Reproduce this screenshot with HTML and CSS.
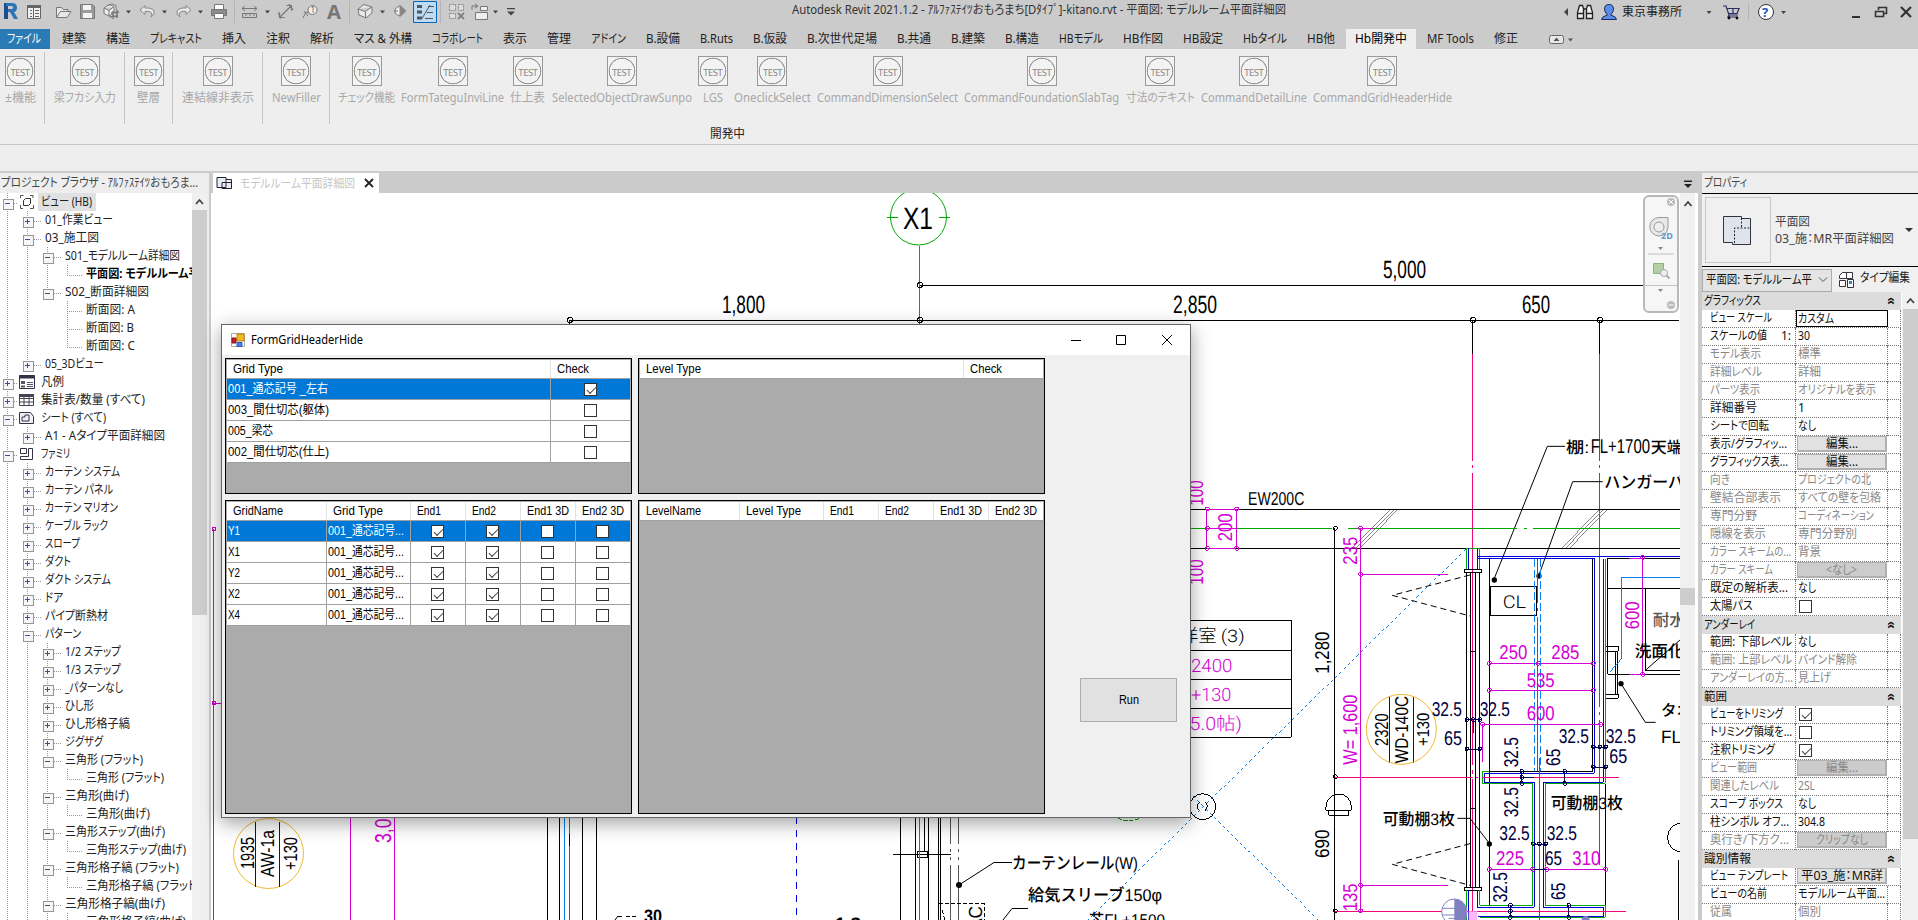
FILE: index.html
```html
<!DOCTYPE html>
<html lang="ja">
<head>
<meta charset="utf-8">
<title>Autodesk Revit 2021.1.2</title>
<link rel="stylesheet" href="styles.css">
</head>
<body>
<header class="titlebar">
  <svg class="qat" width="520" height="29" viewBox="0 0 520 29">
    <path d="M4 3h4v16H4z" fill="#1b4f8f"/><path d="M6 3h6q5 0 5 5q0 3-3 4l4 7h-4l-4-7H8V9h4q1 0 1-1.500T12 6H6z" fill="#2a75b8"/>
    <g fill="#f0f0f0" stroke="#666"><path d="M27.500 5.500h13v13h-13z"/><path d="M27 6.500h14" stroke-width="3"/><path d="M30 10.500h2M30 13.500h2M30 16.500h2M35 10.500h4M35 13.500h4M35 16.500h4M33.500 8v10" stroke-width="1"/></g>
    <path d="M56.500 17.500v-10h5l1.500 2h5v2.500M56.500 17.500l4-6h10.500l-4 6z" fill="#e8e8e8" stroke="#777"/>
    <path d="M80.500 4.500h12l2 2v12h-14z" fill="#9a9a9a" stroke="#777"/><path d="M83 5h8v5h-8zM83 13h9v5h-9z" fill="#f4f4f4"/>
    <path d="M104 8l5-3.500l5 2v6l-5 3.500l-5-2.500zM104 8l5 2.500l5-4M109 10.500v6M108 5.500q3-3 8 0v5" fill="#eee" stroke="#777"/><path d="M111 13l8-1M110 17l8-1M113 11v8M117 10v8" stroke="#777" stroke-width="1.500"/>
    <path d="M145 5.500l-5 4.500l5 4.500v-3q5-1 6.500 1.500q1 2-.5 4q4-2 3-6q-1.500-3.500-9-3z" fill="#e6e6e6" stroke="#888"/>
    <path d="M186 5.500l5 4.500l-5 4.500v-3q-5-1-6.500 1.500q-1 2 .5 4q-4-2-3-6q1.500-3.500 9-3z" fill="#e6e6e6" stroke="#888"/>
    <path d="M214.500 4.500h9v6h-9z" fill="#fff" stroke="#777"/><path d="M211.500 9.500h15v6h-15z" fill="#8d8d8d" stroke="#777"/><path d="M214.500 13.500h9v5h-9z" fill="#fff" stroke="#777"/>
    <path d="M242 8.500h15M245 6l-3 2.500l3 2.500M254 6l3 2.500l-3 2.500M242.500 13.500h14v4h-14zM246 13v3M250 13v3M254 13v3" fill="none" stroke="#777"/>
    <path d="M280 17l11-11M286.500 5.500h5v5M284.500 17.500h-5v-5M278.500 12.500l2 6M289 4l4 6" fill="none" stroke="#777" stroke-width="1.200"/>
    <circle cx="312.500" cy="10" r="4.500" fill="#eee" stroke="#777"/><text x="310.500" y="13" font-size="8" fill="#555">1</text><path d="M303 18l3-6l3 1M304 11l4 5" fill="none" stroke="#777"/>
    <text x="327" y="19" font-size="19" font-weight="bold" fill="#777" textLength="14" lengthAdjust="spacingAndGlyphs">A</text>
    <path d="M358 9l6-4.500l8 2.500v6l-6 5l-7-3zM358 9l7 2.500l7-4.500M365.500 12v6" fill="#e8e8e8" stroke="#777"/>
    <circle cx="399.500" cy="11" r="4.500" fill="#eee" stroke="#777"/><path d="M399.500 4.500v13l7-6.500z" fill="#888"/><path d="M394 11h4" stroke="#777"/>
    <path d="M413.500 1.500h23v21h-23z" fill="#bcdcf6" stroke="#0a63b8"/><path d="M417 6.500h5M417 12h5M417 18h5" stroke="#555" stroke-width="3"/><path d="M422 18.500l8-13.500M428 6.500h6M427 12.500h6M425 18.500h8" stroke="#555" fill="none"/>
    <path d="M449.500 4.500h6v6h-6zM458.500 4.500h5v6h-5zM449.500 13.500h6v5h-6z" fill="#ddd" stroke="#888" stroke-dasharray="2 1"/><path d="M458 13l6 6M464 13l-6 6" stroke="#777" stroke-width="1.700"/>
    <path d="M475.500 12.500h12v7h-12zM480.500 6.500h7v4h-7z" fill="#eee" stroke="#777"/><path d="M472 10v-4h6M475 4l3 2l-3 2" fill="none" stroke="#777"/>
    <path d="M234.500 1v22M349.500 1v22M440.500 1v22" stroke="#b4b4b4"/>
    <g fill="#444"><path d="M126 10.500h5l-2.500 3zM162 10.500h5l-2.500 3zM198 10.500h5l-2.500 3zM265 10.500h5l-2.500 3zM380 10.500h5l-2.500 3zM493 10.500h5l-2.500 3zM507 11.500h8l-4 4zM507 8h8v1.300h-8z"/></g>
  </svg>
  <h1 class="app-title"><span data-w="494">Autodesk Revit 2021.1.2 - ｱﾙﾌｧｽﾃｲﾂおもろまち[Dﾀｲﾌﾟ]-kitano.rvt - 平面図: モデルルーム平面詳細図</span></h1>
  <div class="account">
    <svg width="58" height="29" viewBox="1562 0 58 29"><path d="M1568 8v8l-4-4z" fill="#444"/><g fill="#eee" stroke="#222" stroke-width="1.300"><path d="M1577.500 18.500v-6l2-7h3l1 3v10zM1592.500 18.500v-6l-2-7h-3l-1 3v10z"/><path d="M1577.500 13.500h6M1586.500 13.500h6M1583.500 9h3"/></g><path d="M1601.500 19.500q0-3 6-4.500q-3-3-3-6q0-4.500 4.500-4.500t4.500 4.500q0 3-3 6q6 1.500 6 4.500z" fill="#5b8ee8" stroke="#1a2a60"/></svg>
    <span data-w="60">東京事務所</span>
    <svg width="236" height="29" viewBox="1682 0 236 29"><path d="M1706.500 11h5l-2.500 3zM1781 11h5l-2.500 3z" fill="#444"/><path d="M1723 6h3l3 9h9M1727 8.500h12l-2 5h-9M1733 8v6M1729 15l-1 2h9" fill="none" stroke="#2a2f60" stroke-width="1.200"/><circle cx="1729" cy="18" r="1.400"/><circle cx="1737" cy="18" r="1.400"/><path d="M1748.500 3v17" stroke="#b4b4b4"/><circle cx="1766" cy="12" r="7.500" fill="#fff" stroke="#333"/><text x="1762" y="17" font-size="13" font-weight="bold" fill="#2255bb">?</text><path d="M1852 16h8v2h-8z" fill="#333"/><path d="M1878.500 10v-2.500h8v6h-3M1875.500 11.500h8v5h-8z" fill="none" stroke="#333" stroke-width="1.600"/><path d="M1901 7l10 10M1911 7l-10 10" stroke="#333" stroke-width="2.200"/></svg>
  </div>
</header>
<nav class="tabs">
  <div class="tab file"><span data-w="34">ファイル</span></div>
  <div class="tab"><span data-w="24">建築</span></div><div class="tab"><span data-w="24">構造</span></div><div class="tab"><span data-w="52">プレキャスト</span></div><div class="tab"><span data-w="24">挿入</span></div><div class="tab"><span data-w="24">注釈</span></div><div class="tab"><span data-w="24">解析</span></div><div class="tab"><span data-w="58">マス &amp; 外構</span></div><div class="tab"><span data-w="51">コラボレート</span></div><div class="tab"><span data-w="24">表示</span></div><div class="tab"><span data-w="24">管理</span></div><div class="tab"><span data-w="35">アドイン</span></div><div class="tab"><span data-w="34">B.設備</span></div><div class="tab"><span data-w="33">B.Ruts</span></div><div class="tab"><span data-w="34">B.仮設</span></div><div class="tab"><span data-w="70">B.次世代足場</span></div><div class="tab"><span data-w="34">B.共通</span></div><div class="tab"><span data-w="34">B.建築</span></div><div class="tab"><span data-w="34">B.構造</span></div><div class="tab"><span data-w="44">HBモデル</span></div><div class="tab"><span data-w="40">HB作図</span></div><div class="tab"><span data-w="40">HB設定</span></div><div class="tab"><span data-w="44">Hbタイル</span></div><div class="tab"><span data-w="28">HB他</span></div><div class="tab active"><span data-w="52">Hb開発中</span></div><div class="tab"><span data-w="47">MF Tools</span></div><div class="tab"><span data-w="24">修正</span></div>
  <svg class="tab-toggle" width="28" height="20" viewBox="0 0 28 20"><rect x=".5" y="6.500" width="14" height="8" rx="2" fill="#e8e8e8" stroke="#666"/><path d="M4.500 12h6l-3-3.500zM19 9.500h5l-2.500 3z" fill="#555"/></svg>
</nav>
<section class="ribbon">
  <div class="buttons">
    <div class="group"><div class="cmd"><i>TEST</i><span data-w="31">±機能</span></div></div>
    <div class="group"><div class="cmd"><i>TEST</i><span data-w="62">梁フカシ入力</span></div></div>
    <div class="group"><div class="cmd"><i>TEST</i><span data-w="23">壁層</span></div></div>
    <div class="group"><div class="cmd"><i>TEST</i><span data-w="72">連結線非表示</span></div></div>
    <div class="group"><div class="cmd"><i>TEST</i><span data-w="49">NewFiller</span></div></div>
    <div class="group"><div class="cmd"><i>TEST</i><span data-w="57">チェック機能</span></div><div class="cmd"><i>TEST</i><span data-w="103">FormTateguInviLine</span></div><div class="cmd"><i>TEST</i><span data-w="35">仕上表</span></div><div class="cmd"><i>TEST</i><span data-w="140">SelectedObjectDrawSunpo</span></div><div class="cmd"><i>TEST</i><span data-w="20">LGS</span></div><div class="cmd"><i>TEST</i><span data-w="77">OneclickSelect</span></div><div class="cmd"><i>TEST</i><span data-w="141">CommandDimensionSelect</span></div><div class="cmd"><i>TEST</i><span data-w="155">CommandFoundationSlabTag</span></div><div class="cmd"><i>TEST</i><span data-w="69">寸法のテキスト</span></div><div class="cmd"><i>TEST</i><span data-w="106">CommandDetailLine</span></div><div class="cmd"><i>TEST</i><span data-w="139">CommandGridHeaderHide</span></div></div>
  </div>
  <div class="panel-name"><span data-w="35">開発中</span></div>
</section>
<main class="work">
  <aside class="browser">
    <h2><span data-w="197">プロジェクト ブラウザ - ｱﾙﾌｧｽﾃｲﾂおもろま...</span></h2>
    <div class="browser-body">
      <ul class="tree">
        <li class="l0 minus"><svg width="16" height="16" viewBox="0 0 16 16"><path d="M1.500 4v-2.500h3M11 1.500h3V4M14.500 11v3.500H11M4 14.500H1.500V11" fill="none" stroke="#555"/><path d="M4.500 6.500l2-2h5v5l-2 2h-5z" fill="#fff" stroke="#333"/></svg><span class="hl"><span data-w="51">ビュー (HB)</span></span></li>
        <li class="l1 plus"><span data-w="68">01_作業ビュー</span></li>
        <li class="l1 minus"><span data-w="54">03_施工図</span></li>
        <li class="l2 minus"><span data-w="115">S01_モデルルーム詳細図</span></li>
        <li class="l3 mid"><b data-w="158">平面図: モデルルーム平面詳細図</b></li>
        <li class="l2 minus"><span data-w="84">S02_断面詳細図</span></li>
        <li class="l3 more"><span data-w="49">断面図: A</span></li>
        <li class="l3 more"><span data-w="48">断面図: B</span></li>
        <li class="l3"><span data-w="49">断面図: C</span></li>
        <li class="l1 plus"><span data-w="59">05_3Dビュー</span></li>
        <li class="l0 plus"><svg width="16" height="16" viewBox="0 0 16 16"><path d="M.5 1.500h15v13H.5z" fill="#fff" stroke="#334"/><path d="M0 3h16" stroke="#334" stroke-width="3"/><path d="M2 7h4v3H2zM2 11.500h4v2H2z" fill="#556"/><path d="M8 8.500h6M8 10.500h6M8 12.500h6" stroke="#556"/></svg><span data-w="23">凡例</span></li>
        <li class="l0 plus"><svg width="16" height="16" viewBox="0 0 16 16"><path d="M.5 2.500h14v11H.5zM.5 6.500h14M.5 10h14M5 3v10M10 3v10" fill="#fff" stroke="#445"/><path d="M0 3.500h15" stroke="#445" stroke-width="3"/></svg><span data-w="104">集計表/数量 (すべて)</span></li>
        <li class="l0 minus"><svg width="16" height="16" viewBox="0 0 16 16"><path d="M.5 2.500h11l3 4v7H.5zM3 11V7h3V5h4v6z" fill="#eef0f5" stroke="#334"/></svg><span data-w="65">シート (すべて)</span></li>
        <li class="l1 plus"><span data-w="120">A1 - Aタイプ平面詳細図</span></li>
        <li class="l0 minus"><svg width="16" height="16" viewBox="0 0 16 16"><path d="M1.500 2.500h6v5h-6zM9.500 2.500h4v11h-12v-3h8z" fill="#fff" stroke="#334"/></svg><span data-w="29">ファミリ</span></li>
        <li class="l1 plus"><span data-w="75">カーテン システム</span></li>
        <li class="l1 plus"><span data-w="68">カーテン パネル</span></li>
        <li class="l1 plus"><span data-w="73">カーテン マリオン</span></li>
        <li class="l1 plus"><span data-w="63">ケーブル ラック</span></li>
        <li class="l1 plus"><span data-w="35">スロープ</span></li>
        <li class="l1 plus"><span data-w="26">ダクト</span></li>
        <li class="l1 plus"><span data-w="66">ダクト システム</span></li>
        <li class="l1 plus"><span data-w="18">ドア</span></li>
        <li class="l1 plus"><span data-w="63">パイプ断熱材</span></li>
        <li class="l1 minus"><span data-w="36">パターン</span></li>
        <li class="l2 plus"><span data-w="56">1/2 ステップ</span></li>
        <li class="l2 plus"><span data-w="56">1/3 ステップ</span></li>
        <li class="l2 plus"><span data-w="58">_パターンなし</span></li>
        <li class="l2 plus"><span data-w="29">ひし形</span></li>
        <li class="l2 plus"><span data-w="65">ひし形格子縞</span></li>
        <li class="l2 plus"><span data-w="38">ジグザグ</span></li>
        <li class="l2 minus"><span data-w="78">三角形 (フラット)</span></li>
        <li class="l3 mid"><span data-w="78">三角形 (フラット)</span></li>
        <li class="l2 minus"><span data-w="64">三角形(曲げ)</span></li>
        <li class="l3 mid"><span data-w="64">三角形(曲げ)</span></li>
        <li class="l2 minus"><span data-w="100">三角形ステップ(曲げ)</span></li>
        <li class="l3 mid"><span data-w="100">三角形ステップ(曲げ)</span></li>
        <li class="l2 minus"><span data-w="114">三角形格子縞 (フラット)</span></li>
        <li class="l3 mid"><span data-w="114">三角形格子縞 (フラット)</span></li>
        <li class="l2 minus"><span data-w="100">三角形格子縞(曲げ)</span></li>
        <li class="l3 mid"><span data-w="100">三角形格子縞(曲げ)</span></li>
      </ul>
      <div class="scroll"><svg width="15" height="17" viewBox="0 0 15 17"><path d="M4 11l3.500-4l3.500 4" fill="none" stroke="#444" stroke-width="1.800"/></svg><div class="thumb"></div></div>
    </div>
  </aside>
  <section class="view">
    <div class="view-tabs">
      <div class="view-tab"><svg width="17" height="16" viewBox="0 0 17 16"><path d="M1 2.500h9v10H1zM10 4.500h5.500v9H6v-6h9" fill="#e8edf5" stroke="#223"/></svg><span data-w="115">モデルルーム平面詳細図</span><svg width="12" height="12" viewBox="0 0 12 12"><path d="M2 2l8 8M10 2l-8 8" stroke="#222" stroke-width="1.800"/></svg></div>
      <svg class="tab-menu" width="12" height="12" viewBox="0 0 12 12"><path d="M2 2.500h8v1.500H2zM2 6h8l-4 4z" fill="#222"/></svg>
    </div>
    <div class="canvas">
      <svg class="drawing" width="1469" height="727" viewBox="211 193 1469 727" text-rendering="geometricPrecision">
        <g class="ln green"><path d="M919.500 246V324M887 217.500h11M939 217.500h11" /><circle class="soft" cx="918.500" cy="217" r="28"/><path d="M1118 818q11 6 22 0" stroke-dasharray="4 2"/></g>
        <g class="ln blk"><path d="M920 285.500H1679M570 320.500H1679M569.500 320v5M1472.500 320v34M1599.500 320v34"/><circle cx="570" cy="320" r="2.500"/><circle cx="920" cy="320" r="2.500"/><circle cx="920" cy="285" r="2.500"/><circle cx="1473" cy="320" r="2.500"/><circle cx="1600" cy="320" r="2.500"/></g>
        <g class="ln pink"><path d="M1472.500 354V461M1472.500 465v3M1472.500 473V765M1472.500 770v4M1472.500 779V920M1599.500 354V461M1599.500 465v3M1599.500 473V707M1599.500 712v3M1599.500 720V865"/></g>
        <g class="txt"><text x="903" y="229" font-size="31" textLength="30">X1</text><text x="722" y="313" textLength="43">1,800</text><text x="1173" y="313" textLength="44">2,850</text><text x="1383" y="278" textLength="43">5,000</text><text x="1522" y="313" textLength="28">650</text></g>
        <g transform="translate(1180 460) scale(.333333)" class="wide">
          <g class="ln gray"><path d="M516 264L630 150M528 264L641 150M540 264L652 150M1145 264L1258 150M1157 264L1269 150M1169 264L1281 150"/></g>
          <g class="ln blk"><path d="M0 148.500H1500M0 265.500H1500M463.500 205V1380M0 481.500H334.500V831.500H0M0 571.500H334M0 658.500H334M0 744.500H334"/>
            <path d="M859.500 337V1283M871.500 337V1283M886.500 337V1283M898.500 337V1283M871 574.500H886M871 1045.500H886M853.500 328.500h52v9h-52zM853.500 1283.500h52v8h-52z"/>
            <path d="M928.500 296V1335M1237.500 296V934M928 934.500H1240M931.500 379.500H1070.500V466.500H931.500zM1276.500 971V1336"/>
            <path d="M1283.500 643V295.500H1500M1283 385.500H1500M1396.500 385V631.500H1500M1283 643.500H1500M1277 559.500h38v15h-38zM1277 702.500h38v13h-38zM1307 574V702M1312 574V702"/>
            <path class="soft" d="M1396 631L1500 540M1155 -41H1102L943 355M1268 65H1178L1077 345M832 1075H870L928 1150M1323 671L1396 787H1427"/>
            <path class="soft" d="M870 345L637 406L870 468M870 1151L637 1213L870 1276" stroke-dasharray="18 12"/>
            <circle cx="68" cy="1040" r="39"/><path d="M60 1025q-16 14 0 28M74 1025q16 14 0 28M438 1051V1040a38 38 0 0 1 76 0V1051zM446 1066H506V1051M446 1066V1051M1500 1089a44 44 0 0 0 0 87M1495.500 1200V1380"/>
            <circle cx="466" cy="205" r="6"/><circle cx="466" cy="950" r="6"/><circle cx="466" cy="1353" r="6"/></g>
          <g fill="#000"><circle cx="943" cy="360" r="8"/><circle cx="1077" cy="348" r="8"/><circle cx="928" cy="1152" r="8"/><circle cx="1323" cy="671" r="8"/></g>
          <g class="ln green"><path d="M0 205.500H455M503 205.500H1012M1032 205.500h9M1059 205.500H1500M860.500 328V265.500H898.500V328M1276.500 296V970.500H1096.500V1336.500H1276.500V1372.500H899M899.500 1291V1336.500H1058.500V970.500H907.500V934.500H928M860.500 1291V1380"/></g>
          <g class="ln blue"><path d="M865.500 265V328M892.500 265V328M893 289.500H1500M893 295.500H1243.500V940.500H913.500V967.500H1063.500V1342.500H892.500V1291M1270.500 296V967.500H1090.500V1342.500H1270.500V1370.500H893M865.500 1291V1380M628.500 711V908M700.500 711V908"/></g>
          <g class="ln pink"><path d="M464 952.500H878M888 952.500h6M906 952.500H1317M464 1354.500H1338M1078.500 895V1380"/></g>
          <g class="ln mag"><path d="M80.500 148.500H168.500V265.500H80.500zM80 205.500H168M541.500 205V1353M542 343.500H804M542 1276.500H804M542 205.500H582M928 610.500H1240M928 691.500H1240M908 793.500H1262M907.500 793V906M1072.500 296V430M1072.500 445v9M1072.500 470V934M1387.500 292V643M1347 295.500H1388M1347 643.500H1388M928 1228.500H1058M1100 1228.500H1277"/>
            <circle cx="82" cy="147" r="6"/><circle cx="170" cy="147" r="6"/><circle cx="82" cy="205" r="6"/><circle cx="82" cy="265" r="6"/><circle cx="170" cy="265" r="6"/><circle cx="542" cy="205" r="6"/><circle cx="542" cy="343" r="6"/><circle cx="542" cy="1276" r="6"/><circle cx="542" cy="1353" r="6"/><circle cx="928" cy="610" r="6"/><circle cx="1075" cy="610" r="6"/><circle cx="1240" cy="610" r="6"/><circle cx="928" cy="691" r="6"/><circle cx="1240" cy="691" r="6"/><circle cx="908" cy="793" r="6"/><circle cx="1262" cy="793" r="6"/><circle cx="1388" cy="292" r="6"/><circle cx="1388" cy="643" r="6"/><circle cx="928" cy="1228" r="6"/><circle cx="1058" cy="1228" r="6"/><circle cx="1100" cy="1228" r="6"/><circle cx="1277" cy="1228" r="6"/></g>
          <g class="ln navy"><path d="M859 779.500H902M859 867.500H902M1240 861.500H1280M1240 921.500H1280M1058 1152.500H1100M1058 1228.500H1100M1026 934V970M1155 934V970M1026 952.500H1063M991.500 1336V1372M1167 1336V1372M880 779V820"/>
            <circle cx="861" cy="779" r="6"/><circle cx="880" cy="779" r="6"/><circle cx="900" cy="779" r="6"/><circle cx="861" cy="867" r="6"/><circle cx="900" cy="867" r="6"/><circle cx="1240" cy="861" r="6"/><circle cx="1260" cy="861" r="6"/><circle cx="1278" cy="861" r="6"/><circle cx="1240" cy="921" r="6"/><circle cx="1278" cy="921" r="6"/><circle cx="1060" cy="1152" r="6"/><circle cx="1078" cy="1152" r="6"/><circle cx="1098" cy="1152" r="6"/><circle cx="1026" cy="934" r="6"/><circle cx="1026" cy="952" r="6"/><circle cx="1026" cy="970" r="6"/><circle cx="1155" cy="934" r="6"/><circle cx="1155" cy="970" r="6"/><circle cx="991" cy="1336" r="6"/><circle cx="991" cy="1354" r="6"/><circle cx="991" cy="1372" r="6"/><circle cx="1167" cy="1336" r="6"/><circle cx="1167" cy="1372" r="6"/></g>
          <g class="ln sky"><path d="M1064.500 296V934M1081.500 296V934" stroke-dasharray="24 9"/><path d="M1500 352.500H1324.500V596L1290 636"/><path d="M857 268L-281 1385M0 970L413 1378" stroke-dasharray="9 9"/></g>
          <circle class="ln soft yel" cx="664" cy="808" r="105"/>
          <g><circle cx="823" cy="1355" r="38" fill="#fff" stroke="#8080c0" stroke-width="3"/><path d="M823 1317a38 38 0 0 1 36 26v37h-36z" fill="#8080c0"/><path d="M788 1345h70M788 1365h70M806 1375h50" stroke="#8080c0" stroke-width="3"/><path d="M866 1354h26v26h-26z" fill="#ffb8ff"/><path d="M1205 1380a12 12 0 0 1 24 0z" fill="#8080c0"/></g>
          <g class="txt big"><text x="204" y="136" font-size="56" textLength="169">EW200C</text>
            <text x="1158" y="-22" font-size="48" textLength="70">棚:</text><text x="1232" y="-20" textLength="178">FL+1700</text><text x="1412" y="-22" font-size="48">天端</text>
            <text x="1273" y="83" font-size="50" textLength="335">ハンガーパイプ</text><text x="608" y="1094" font-size="50" textLength="217">可動棚3枚</text><text x="1112" y="1048" font-size="50" textLength="217">可動棚3枚</text>
            <text x="1364" y="592" font-size="50">洗面化粧台</text><text x="1418" y="497" font-size="50" fill="#555">耐水</text><text x="1443" y="768" font-size="48" textLength="140">タオル</text><text x="1443" y="848" font-size="54" textLength="120">FL+1</text></g>
          <g class="txt big thin"><text x="968" y="445" font-size="53" textLength="70">CL</text><text x="0" y="547" font-size="55" textLength="110">洋室</text><text x="122" y="547" font-size="52" textLength="72">(3)</text></g>
          <g class="txt big mg thin"><text x="33" y="635" font-size="55" textLength="124">2400</text><text x="33" y="724" font-size="55" textLength="121">+130</text><text x="10" y="811" font-size="55" textLength="176">(5.0帖)</text></g>
          <g class="txt big mg"><text x="958" y="597" textLength="84">250</text><text x="1114" y="597" textLength="84">285</text><text x="1040" y="681" textLength="84">535</text><text x="1040" y="779" textLength="84">600</text><text x="948" y="1215" textLength="84">225</text><text x="1177" y="1215" textLength="84">310</text>
            <text transform="translate(69 137) rotate(-90)" textLength="76">100</text><text transform="translate(155 244) rotate(-90)" textLength="84">200</text><text transform="translate(69 374) rotate(-90)" textLength="76">100</text><text transform="translate(531 314) rotate(-90)" textLength="84">235</text><text transform="translate(531 914) rotate(-90)" textLength="210">W= 1,600</text><text transform="translate(531 1354) rotate(-90)" textLength="84">135</text><text transform="translate(1377 508) rotate(-90)" textLength="84">600</text></g>
          <g class="txt big"><text transform="translate(446 641) rotate(-90)" textLength="126">1,280</text><text transform="translate(446 1194) rotate(-90)" textLength="86">690</text><text transform="translate(624 858) rotate(-90)" font-size="56" textLength="98">2320</text><text transform="translate(683 910) rotate(-90)" font-size="56" textLength="202">WD-140C</text><text transform="translate(748 858) rotate(-90)" font-size="52" textLength="100">+130</text></g>
          <g class="txt big nv"><text x="755" y="768" textLength="91">32.5</text><text x="899" y="768" textLength="91">32.5</text><text x="792" y="854" textLength="54">65</text><text x="1136" y="848" textLength="91">32.5</text><text x="1277" y="848" textLength="91">32.5</text><text x="1288" y="909" textLength="54">65</text><text x="958" y="1140" textLength="91">32.5</text><text x="1100" y="1140" textLength="91">32.5</text><text x="1095" y="1215" textLength="51">65</text>
            <text transform="translate(1013 922) rotate(-90)" textLength="91">32.5</text><text transform="translate(1141 918) rotate(-90)" textLength="52">65</text><text transform="translate(1013 1072) rotate(-90)" textLength="91">32.5</text><text transform="translate(980 1327) rotate(-90)" textLength="91">32.5</text><text transform="translate(1154 1320) rotate(-90)" textLength="52">65</text></g>
        </g>
        <g class="ln mag"><path d="M213.500 529V920M213 703.500h9M350.500 815V920M394.500 815V920"/><circle cx="214" cy="529" r="2"/><circle cx="214" cy="703" r="2"/></g>
        <circle class="ln soft yel" cx="268.500" cy="853.500" r="35"/>
        <g class="ln blue"><path d="M255.500 822V887M279.500 822V887"/><path d="M796.500 817V920" stroke-dasharray="7 6"/></g>
        <g class="txt"><text transform="translate(254 869) rotate(-90)" font-size="19" textLength="32">1935</text><text transform="translate(274 877) rotate(-90)" font-size="19" textLength="47">AW-1a</text><text transform="translate(297 870) rotate(-90)" font-size="19" textLength="33">+130</text><text class="mg" transform="translate(391 843) rotate(-90)" font-size="23" textLength="44">3,035</text></g>
        <g class="ln blk"><path d="M547.500 815V920M559.500 815V920M582.500 815V920M596.500 815V920M900.500 815V920M915.500 815V920M924.500 815V851M928.500 815V920M938.500 815V920M940.500 815V920M893 854.500H951M917.500 851.500h10v6h-10z"/><path d="M950.500 815V844M950.500 849v3M950.500 857v3M950.500 865V920M958.500 815V844M958.500 849v3M958.500 857v3M958.500 865V920" stroke="#555"/><path d="M939 903.500H984V920M942 910l3 10M618 916.500h4M626 916.500h10" stroke-dasharray="4 2"/><path class="soft" d="M959 885L994 862.500H1012M1028 908.500H1012L1003 920M618 916l-3 4"/></g>
        <path d="M564.500 815V920" class="ln sky"/><path d="M569.500 815V834M569.500 846V920" class="ln pink"/><path d="M919.500 815V920" class="ln green"/><path d="M569.500 834V846" class="ln blk"/>
        <circle cx="959" cy="885" r="3"/>
        <g class="txt"><text x="1012" y="869" font-size="17" textLength="126">カーテンレール(W)</text><text x="1028" y="901" font-size="17" textLength="134">給気スリーブ150φ</text><text x="1089" y="926" font-size="17" textLength="76">芯FL+1500</text><text transform="translate(982 930) rotate(-90)" font-size="19" textLength="24">AC</text><text x="644" y="922" font-size="18" font-weight="bold" textLength="18">30</text><text x="835" y="930" font-size="18" font-weight="bold" textLength="26">1 2</text></g>
      </svg>
      <svg class="navbar" width="36" height="118" viewBox="0 0 36 118"><rect x="1" y="1" width="34" height="116" rx="5" fill="#f4f4f4" fill-opacity=".8" stroke="#b8b8b8" stroke-width="2"/><circle cx="28" cy="7" r="4" fill="#bbb"/><path d="M26 5l4 4M30 5l-4 4" stroke="#fff"/><path d="M16 22.500h9v10q-1 8-9 8.500a9 9 0 0 1 0-18.500z" fill="#e6e8ea" stroke="#999"/><circle cx="16" cy="32" r="5" fill="#eee" stroke="#999"/><text x="18" y="44" font-size="9" font-weight="bold" fill="#6a98c8">2D</text><path d="M15 52h5l-2.500 3zM15 94h5l-2.500 3z" fill="#888"/><path d="M5 59h26" stroke="#c0c0c0"/><path d="M10.500 68.500h10v10h-10z" fill="#b5cfa5" stroke="#8db080"/><circle cx="21" cy="78" r="3.500" fill="#eee" stroke="#aaa"/><path d="M23.500 80.500l3 3" stroke="#aaa" stroke-width="2"/><circle cx="28" cy="110" r="4" fill="#bbb"/><path d="M25.500 110h5" stroke="#fff"/></svg>
      <div class="scroll"><svg width="15" height="17" viewBox="0 0 15 17"><path d="M4.500 13l3.500-4l3.500 4" fill="none" stroke="#444" stroke-width="1.800"/></svg><div class="thumb"></div></div>
    </div>
  </section>
  <aside class="props">
    <h2><span data-w="43">プロパティ</span></h2>
    <div class="type">
      <div class="thumbnail"><svg width="36" height="36" viewBox="0 0 36 36"><path d="M3.500 4.500h18v2h9v26h-18v-2h-9z" fill="#dfe3ea" stroke="#334"/><path d="M14.500 31v-15h16M21.500 6v10" fill="none" stroke="#223" stroke-dasharray="2 1.500"/></svg></div>
      <div class="type-name"><span data-w="35">平面図</span><span data-w="119">03_施：MR平面詳細図</span></div>
      <svg width="8" height="6" viewBox="0 0 8 6"><path d="M0 1h8l-4 4z" fill="#333"/></svg>
    </div>
    <div class="instance"><div class="select"><span data-w="106">平面図: モデルルーム平</span><svg width="10" height="8" viewBox="0 0 10 8"><path d="M1 1.500l4 4l4-4" fill="none" stroke="#555"/></svg></div><svg width="17" height="17" viewBox="0 0 17 17"><path d="M1.500 4.500l3-3h4v6h-7zM8.500 1.500h6v6h-6M1.500 9.500h6v6h-6z" fill="#fff" stroke="#334"/><path d="M9.500 8.500h6v8h-6z" fill="#fff" stroke="#334"/><path d="M11 10h3v3h-3z" fill="#38c"/></svg><span data-w="50">タイプ編集</span></div>
    <div class="props-body">
      <div class="grid">
        <h3><span data-w="57">グラフィックス</span></h3>
        <div class="row"><div><span data-w="62">ビュー スケール</span></div><div class="edit"><span data-w="36">カスタム</span></div><div></div></div>
        <div class="row"><div><span data-w="57">スケールの値</span><span class="unit">1:</span></div><div><span data-w="12">30</span></div><div></div></div>
        <div class="row off"><div><span data-w="51">モデル表示</span></div><div><span data-w="23">標準</span></div><div></div></div>
        <div class="row off"><div><span data-w="52">詳細レベル</span></div><div><span data-w="23">詳細</span></div><div></div></div>
        <div class="row off"><div><span data-w="50">パーツ表示</span></div><div><span data-w="78">オリジナルを表示</span></div><div></div></div>
        <div class="row"><div><span data-w="47">詳細番号</span></div><div><span>1</span></div><div></div></div>
        <div class="row"><div><span data-w="59">シートで回転</span></div><div><span data-w="18">なし</span></div><div></div></div>
        <div class="row"><div><span data-w="77">表示/グラフィッ...</span></div><div class="btn"><span data-w="32">編集...</span></div><div></div></div>
        <div class="row"><div><span data-w="78">グラフィックス表...</span></div><div class="btn"><span data-w="32">編集...</span></div><div></div></div>
        <div class="row off"><div><span data-w="20">向き</span></div><div><span data-w="73">プロジェクトの北</span></div><div></div></div>
        <div class="row off"><div><span data-w="71">壁結合部表示</span></div><div><span data-w="83">すべての壁を包絡</span></div><div></div></div>
        <div class="row off"><div><span data-w="47">専門分野</span></div><div><span data-w="76">コーディネーション</span></div><div></div></div>
        <div class="row off"><div><span data-w="56">隠線を表示</span></div><div><span data-w="59">専門分野別</span></div><div></div></div>
        <div class="row off"><div><span data-w="81">カラー スキームの...</span></div><div><span data-w="23">背景</span></div><div></div></div>
        <div class="row off"><div><span data-w="63">カラー スキーム</span></div><div class="btn"><span data-w="31">&lt;なし&gt;</span></div><div></div></div>
        <div class="row"><div><span data-w="78">既定の解析表...</span></div><div><span data-w="18">なし</span></div><div></div></div>
        <div class="row"><div><span data-w="43">太陽パス</span></div><div><i class="cb"></i></div><div></div></div>
        <h3><span data-w="51">アンダーレイ</span></h3>
        <div class="row"><div><span data-w="82">範囲: 下部レベル</span></div><div><span data-w="18">なし</span></div><div></div></div>
        <div class="row off"><div><span data-w="82">範囲: 上部レベル</span></div><div><span data-w="59">バインド解除</span></div><div></div></div>
        <div class="row off"><div><span data-w="83">アンダーレイの方...</span></div><div><span data-w="33">見上げ</span></div><div></div></div>
        <h3><span data-w="23">範囲</span></h3>
        <div class="row"><div><span data-w="73">ビューをトリミング</span></div><div><i class="cb on"></i></div><div></div></div>
        <div class="row"><div><span data-w="82">トリミング領域を...</span></div><div><i class="cb"></i></div><div></div></div>
        <div class="row"><div><span data-w="65">注釈トリミング</span></div><div><i class="cb on"></i></div><div></div></div>
        <div class="row off"><div><span data-w="47">ビュー範囲</span></div><div class="btn"><span data-w="32">編集...</span></div><div></div></div>
        <div class="row off"><div><span data-w="69">関連したレベル</span></div><div><span data-w="17">2SL</span></div><div></div></div>
        <div class="row"><div><span data-w="73">スコープ ボックス</span></div><div><span data-w="18">なし</span></div><div></div></div>
        <div class="row"><div><span data-w="79">柱シンボル オフ...</span></div><div><span data-w="27">304.8</span></div><div></div></div>
        <div class="row off"><div><span data-w="79">奥行き/下方ク...</span></div><div class="btn"><span data-w="52">クリップなし</span></div><div></div></div>
        <h3><span data-w="47">識別情報</span></h3>
        <div class="row"><div><span data-w="78">ビュー テンプレート</span></div><div class="btn"><span data-w="82">平03_施：MR詳</span></div><div></div></div>
        <div class="row"><div><span data-w="57">ビューの名前</span></div><div><span data-w="87">モデルルーム平面...</span></div><div></div></div>
        <div class="row off"><div><span data-w="22">従属</span></div><div><span data-w="23">個別</span></div><div></div></div>
      </div>
      <div class="scroll"><svg width="15" height="17" viewBox="0 0 15 17"><path d="M4 11l3.500-4l3.500 4" fill="none" stroke="#444" stroke-width="1.800"/></svg><div class="thumb"></div></div>
    </div>
  </aside>
</main>
<div class="dialog">
  <div class="dialog-title">
    <svg width="14" height="14" viewBox="0 0 14 14"><path d="M.5 .5h13v13H.5z" fill="#fff" stroke="#aaa"/><path d="M6 1h7v7H6z" fill="#f4b820" stroke="#b8860b"/><path d="M1 5h4v5H1z" fill="#c22" stroke="#811"/><path d="M6 9.500h5v4H6z" fill="#4a80e8" stroke="#2a5ac0"/></svg>
    <span data-w="112">FormGridHeaderHide</span>
    <svg class="controls" width="101" height="12" viewBox="0 0 101 12"><path d="M0 6.500h10M45.500 1.500h9v9h-9z" fill="none" stroke="#000"/><path d="M91 1l10 10M101 1l-10 10" stroke="#000"/></svg>
  </div>
  <div class="dialog-body">
    <div class="tables">
      <div class="dg types">
        <div class="hd"><div><span data-w="50">Grid Type</span></div><div><span data-w="32">Check</span></div></div>
        <div class="rw sel"><div><span data-w="100">001_通芯記号 _左右</span></div><div><i class="cb on"></i></div></div>
        <div class="rw"><div><span data-w="101">003_間仕切芯(躯体)</span></div><div><i class="cb"></i></div></div>
        <div class="rw"><div><span data-w="45">005_梁芯</span></div><div><i class="cb"></i></div></div>
        <div class="rw"><div><span data-w="101">002_間仕切芯(仕上)</span></div><div><i class="cb"></i></div></div>
      </div>
      <div class="dg types">
        <div class="hd"><div><span data-w="55">Level Type</span></div><div><span data-w="32">Check</span></div></div>
      </div>
      <div class="dg names">
        <div class="hd"><div><span data-w="50">GridName</span></div><div><span data-w="50">Grid Type</span></div><div><span data-w="24">End1</span></div><div><span data-w="24">End2</span></div><div><span data-w="42">End1 3D</span></div><div><span data-w="42">End2 3D</span></div></div>
        <div class="rw sel"><div><span data-w="12">Y1</span></div><div><span data-w="76">001_通芯記号...</span></div><div><i class="cb on"></i></div><div><i class="cb on"></i></div><div><i class="cb"></i></div><div><i class="cb"></i></div></div>
        <div class="rw"><div><span data-w="12">X1</span></div><div><span data-w="76">001_通芯記号...</span></div><div><i class="cb on"></i></div><div><i class="cb on"></i></div><div><i class="cb"></i></div><div><i class="cb"></i></div></div>
        <div class="rw"><div><span data-w="12">Y2</span></div><div><span data-w="76">001_通芯記号...</span></div><div><i class="cb on"></i></div><div><i class="cb on"></i></div><div><i class="cb"></i></div><div><i class="cb"></i></div></div>
        <div class="rw"><div><span data-w="12">X2</span></div><div><span data-w="76">001_通芯記号...</span></div><div><i class="cb on"></i></div><div><i class="cb on"></i></div><div><i class="cb"></i></div><div><i class="cb"></i></div></div>
        <div class="rw"><div><span data-w="12">X4</span></div><div><span data-w="76">001_通芯記号...</span></div><div><i class="cb on"></i></div><div><i class="cb on"></i></div><div><i class="cb"></i></div><div><i class="cb"></i></div></div>
      </div>
      <div class="dg names">
        <div class="hd"><div><span data-w="55">LevelName</span></div><div><span data-w="55">Level Type</span></div><div><span data-w="24">End1</span></div><div><span data-w="24">End2</span></div><div><span data-w="42">End1 3D</span></div><div><span data-w="42">End2 3D</span></div></div>
      </div>
    </div>
    <button class="run" type="button"><span data-w="20">Run</span></button>
  </div>
</div>
<script src="fit.js"></script>
</body>
</html>
```
FILE: styles.css
```css
* { box-sizing: border-box; }
body { margin: 0; width: 1918px; height: 920px; overflow: hidden; background: #eee; font: 12px/18px "Noto Sans", "Noto Sans CJK JP", sans-serif; font-feature-settings: "palt"; color: #222; display: flex; flex-direction: column; position: relative; }
h1, h2, h3, ul { margin: 0; padding: 0; font-weight: normal; font-size: 12px; }
[data-w] { display: inline-block; white-space: nowrap; flex: none; transform-origin: 0 50%; }
svg { display: block; flex: none; }

.titlebar { height: 29px; flex: none; background: #cbcbcb; display: flex; }
.app-title { margin-left: 272px; line-height: 19px; color: #333; }
.account { margin-left: auto; display: flex; gap: 0; line-height: 24px; white-space: nowrap; }
.account span { margin-left: 2px; }

.tabs { height: 20px; flex: none; background: #cbcbcb; display: flex; gap: 20px; line-height: 19px; }
.tab { display: flex; }
.tab.file { width: 50px; padding-left: 7px; background: #2a7ab5; color: #fff; margin-right: -8px; }
.tab.active { background: #eee; color: #000; padding: 0 9px; margin: 0 -9px; }
.tab-toggle { margin-left: 11px; }

.ribbon { height: 124px; flex: none; background: #eee; border-bottom: 2px solid #cbcbcb; }
.buttons { height: 75px; padding-top: 3px; display: flex; margin-left: -4px; }
.group { display: flex; gap: 6.2px; padding: 4px 8.5px 0; border-right: 1px solid #c4c4c4; height: 72px; }
.group:last-child { border: 0; padding-left: 8px; }
.cmd { display: flex; flex-direction: column; align-items: center; min-width: 30px; color: #a8a8a8; }
.cmd i { width: 30px; height: 30px; border: 1px solid #999; background: radial-gradient(circle, #f3f3f3 12px, #999 12.400px, #999 13.100px, #f3f3f3 13.600px); font: 9.500px/31px "Noto Sans", sans-serif; letter-spacing: -.5px; text-align: center; color: #888; margin-bottom: 3px; }
.panel-name { height: 21px; border-bottom: 1px solid #c8c8c8; padding: 0 0 0 710px; line-height: 19px; }

.work { flex: 1; display: flex; min-height: 0; background: #cbcbcb; }
.work h2 { height: 20px; background: #eee; line-height: 20px; color: #444; }
.browser { width: 209px; margin-right: 2px; background: #eee; }
.browser h2 { padding-left: 1px; }
.browser-body { display: flex; height: 727px; background: #fff; width: 207px; overflow: hidden; }
.tree { width: 192px; list-style: none; overflow: hidden; --v: repeating-linear-gradient(#999 0 1px, transparent 1px 2px); --h: repeating-linear-gradient(90deg, #999 0 1px, transparent 1px 2px); }
.tree li { height: 18px; line-height: 17px; display: flex; position: relative; background-repeat: no-repeat; color: #222; }
.tree li b { color: #000; }
.l0 { padding-left: 19px; background-image: var(--v), var(--h); background-position: 7px 0, 12px 10px; background-size: 1px 18px, 6px 1px; }
.l0 > svg { margin: 1px 6px 0 0; }
.hl { background: #e1e1e1; margin-left: -3px; padding: 0 4px 0 3px; }
.l1 { padding-left: 45px; background-image: var(--v), var(--v), var(--h); background-position: 7px 0, 27px 0, 32px 10px; background-size: 1px 18px, 1px 18px, 10px 1px; }
.l2 { padding-left: 65px; background-image: var(--v), var(--v), var(--v), var(--h); background-position: 7px 0, 27px 0, 47px 0, 52px 10px; background-size: 1px 18px, 1px 18px, 1px 18px, 10px 1px; }
.l3 { padding-left: 86px; background-image: var(--v), var(--v), var(--v), var(--h); background-position: 7px 0, 27px 0, 67px 0, 67px 10px; background-size: 1px 18px, 1px 18px, 1px 11px, 15px 1px; }
.l3.more { background-size: 1px 18px, 1px 18px, 1px 18px, 15px 1px; }
.l3.mid { background-image: var(--v), var(--v), var(--v), var(--h), var(--v); background-position: 7px 0, 27px 0, 67px 0, 67px 10px, 47px 0; background-size: 1px 18px, 1px 18px, 1px 11px, 15px 1px, 1px 18px; }
.plus::before, .minus::before { content: ""; position: absolute; top: 6px; left: 3px; width: 9px; height: 9px; border: 1px solid #959595; background: linear-gradient(#3a4f90, #3a4f90) 1px 3px / 5px 1px no-repeat, #f6f6f6; }
.plus::before { background: linear-gradient(#3a4f90, #3a4f90) 1px 3px / 5px 1px no-repeat, linear-gradient(#3a4f90, #3a4f90) 3px 1px / 1px 5px no-repeat, #f6f6f6; }
.l1::before { left: 23px; }
.l2::before { left: 43px; }

.scroll { width: 15px; background: #f0f0f0; flex: none; }
.scroll .thumb { background: #cdcdcd; width: 15px; }
.browser .thumb { height: 405px; }

.view { width: 1487px; margin-right: 4px; }
.view-tabs { height: 20px; display: flex; justify-content: space-between; background: #cbcbcb; padding-left: 2px; }
.view-tab { width: 166px; background: #fff; display: flex; align-items: center; padding-left: 3px; color: #c6c6c6; line-height: 19px; }
.view-tab span { margin-left: 7px; }
.view-tab svg + span + svg { margin-left: 8px; }
.tab-menu { margin: 5px 4px 0 0; }
.canvas { height: 727px; background: #fff; position: relative; display: flex; }
.canvas .thumb { margin-top: 378px; height: 17px; }
.navbar { position: absolute; left: 1432px; top: 2px; }
.ln { fill: none; stroke-width: 1; shape-rendering: crispEdges; }
.wide .ln { stroke-width: 3; }
.ln.soft, .ln .soft { shape-rendering: auto; }
.blk { stroke: #000; }
.gray { stroke: #888; }
.green { stroke: #00a800; }
.pink { stroke: #f0087a; }
.blue { stroke: #0000dc; }
.mag { stroke: #d400d4; }
.navy { stroke: #000050; }
.sky { stroke: #0a80f0; }
.yel { stroke: #f0b830; }
.txt { font-family: "Liberation Sans", "Noto Sans CJK JP", sans-serif; font-size: 25px; font-weight: 500; font-feature-settings: normal; fill: #000; }
.big { font-size: 60px; }
.mg { fill: #d400d4; }
.nv { fill: #000040; }
.thin { font-family: Roboto, "Noto Sans CJK JP", sans-serif; font-weight: 300; }

.props { width: 216px; background: #f0f0f0; }
.props h2 { padding-left: 2px; }
.type { height: 74px; border: solid #000; border-width: 1px 0; display: flex; align-items: center; padding-left: 3px; background: #f0f0f0; }
.thumbnail { width: 66px; height: 66px; border: 1px solid #c8c8c8; display: flex; align-items: center; justify-content: center; }
.type-name { width: 133px; padding-left: 4px; display: flex; flex-direction: column; line-height: 17px; color: #444; align-items: flex-start; }
.type > svg { margin-left: 1px; }
.instance { height: 25px; padding-top: 1px; display: flex; align-items: center; line-height: 20px; }
.instance > svg { margin: -2px 5px 0 6px; }
.instance > span { margin-top: -4px; }
.select { width: 130px; height: 23px; border: 1px solid #aaa; background: #e4e4e4; display: flex; align-items: center; padding-left: 3px; color: #111; }
.select svg { margin-left: 6px; }
.props-body { display: flex; height: 628px; overflow: hidden; }
.grid { width: 200px; background: #fff; }
.grid h3 { height: 18px; line-height: 17px; background: #dcdcdc; padding-left: 2px; width: 199px; position: relative; color: #111; }
.grid h3::after { content: "«"; position: absolute; right: 5px; top: 1px; font: bold 14px/16px "Liberation Sans", sans-serif; transform: rotate(90deg); color: #111; }
.row { height: 18px; line-height: 16px; width: 199px; display: grid; grid-template-columns: 94px 92px 13px; border-bottom: 1px dotted #777; color: #111; }
.row > div { border-right: 1px dotted #777; display: flex; padding-left: 2px; min-width: 0; height: 18px; }
.row > div:first-child { padding-left: 8px; }
.row.off { color: #888; }
.unit { margin-left: 14px; }
.row > .edit { border: 1px solid #000; line-height: 15px; height: 17px; padding-left: 1px; }
.row > .btn { margin: 0 1px 0 1px; height: 16px; border: 1px solid #b0b0b0; border-right-width: 2px; border-bottom-width: 2px; background: #e1e1e1; justify-content: center; padding: 0; line-height: 14px; }
.off > .btn { background: #ccc; }
.cb { width: 13px; height: 13px; border: 1px solid #333; background: #fff; display: block; flex: none; position: relative; }
.row .cb { margin: 2px 0 0 1px; }
.cb.on::after { content: ""; position: absolute; left: 3px; top: 0; width: 8px; height: 4px; border: solid #444; border-width: 0 0 1.300px 1.300px; transform: translate(-1px, 2.500px) rotate(-45deg); }
.props .scroll { margin-left: 1px; margin-right: -1px; }
.props .thumb { height: 530px; }

.dialog { position: absolute; left: 221px; top: 324px; width: 970px; height: 494px; border: 1px solid #666; background: #f0f0f0; box-shadow: 0 5px 18px rgba(0, 0, 0, .38); color: #000; }
.dialog-title { height: 30px; background: #fff; display: flex; align-items: center; padding: 0 18px 0 9px; gap: 6px; }
.controls { margin-left: auto; }
.dialog-body { display: flex; padding: 3px; gap: 35px; font-family: "Liberation Sans", "Noto Sans CJK JP", sans-serif; font-feature-settings: normal; }
.tables { display: grid; grid-template-columns: 407px 407px; grid-template-rows: 136px 314px; gap: 6px; }
.dg { border: 1px solid #000; background: #ababab; padding: 1px; display: grid; grid-auto-rows: 21px; align-content: start; grid-template-rows: 19px; }
.hd, .rw { display: grid; border-bottom: 1px solid #a0a0a0; background: #fff; }
.types > div { grid-template-columns: 324px 79px; }
.names > div { grid-template-columns: 100px 84px 55px 55px 55px 54px; }
.hd > div { border-right: 1px solid #e2e2e2; padding-left: 6px; line-height: 19px; height: 18px; }
.rw > div { border-right: 1px solid #a0a0a0; padding-left: 1px; line-height: 20px; display: flex; }
.rw > div:has(.cb) { padding: 0; align-items: center; justify-content: center; }
.names .rw > div:has(.cb) { padding-right: 2px; }
.hd > div:last-child, .rw > div:last-child { border-right: 0; }
.sel > div { background: #0078d7; color: #fff; }
.run { width: 97px; height: 44px; margin-top: 320px; border: 1px solid #adadad; background: #e1e1e1; font: 12px "Liberation Sans", sans-serif; color: #000; padding: 0; }
```
FILE: fit.js
```js
// Condense labels to their column width, keeping the layout box in step.
document.querySelectorAll('[data-w]').forEach(function (el) {
  var natural = el.getBoundingClientRect().width;
  var target = Number(el.dataset.w);
  el.style.transform = 'scaleX(' + target / natural + ')';
  el.style.marginRight = (target - natural) + 'px';
});
document.querySelectorAll('text[textLength]').forEach(function (el) {
  el.setAttribute('lengthAdjust', 'spacingAndGlyphs');
});
```
